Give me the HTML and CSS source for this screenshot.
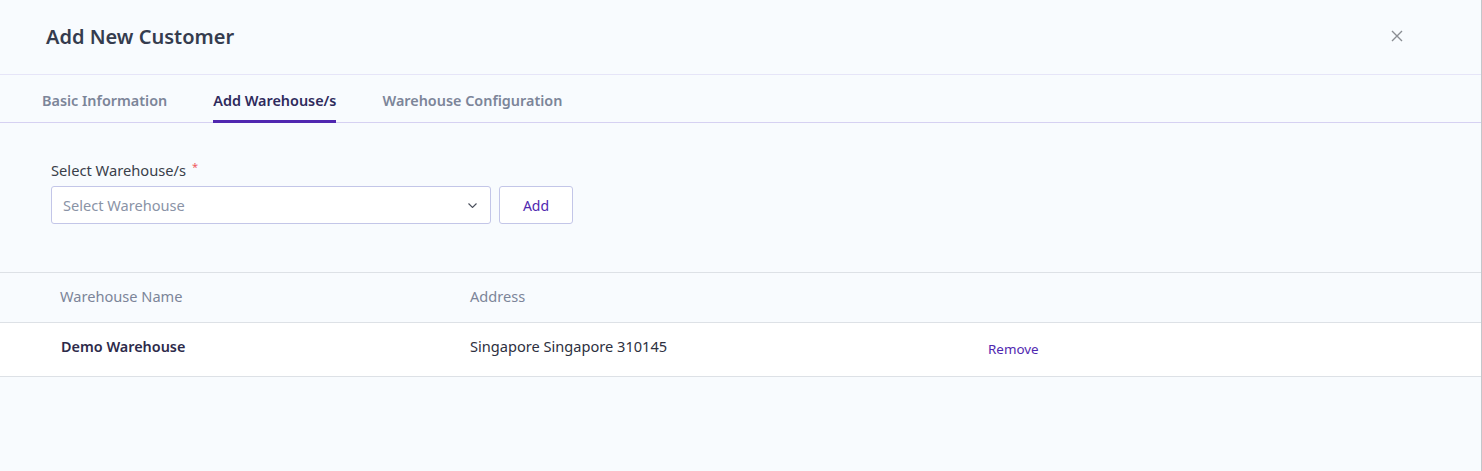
FILE: index.html
```html
<!DOCTYPE html>
<html lang="en">
<head>
  <meta charset="UTF-8" />
  <meta name="viewport" content="width=device-width, initial-scale=1.0"/>
  <title>Add New Customer</title>
  <link rel="stylesheet" href="styles.css">
</head>
<body>
  <div class="modal">
    <div class="modal-header">
      <h2>Add New Customer</h2>
      <button class="close-btn" aria-label="Close">
        <svg width="12" height="12" viewBox="0 0 12 12"><path d="M1 1L11 11M11 1L1 11" stroke="#8a8d93" stroke-width="1.4" fill="none"/></svg>
      </button>
    </div>

    <div class="tabs">
      <div class="tab">Basic Information</div>
      <div class="tab active">Add Warehouse/s</div>
      <div class="tab">Warehouse Configuration</div>
    </div>

    <div class="form-area">
      <label class="field-label">Select Warehouse/s <span class="req">*</span></label>
      <div class="field-row">
        <div class="select">
          <span class="placeholder">Select Warehouse</span>
          <svg width="9" height="5" viewBox="0 0 9 5"><path d="M0.5 0.5L4.5 4.5L8.5 0.5" stroke="#4a4f5c" stroke-width="1.1" fill="none"/></svg>
        </div>
        <button class="btn-add">Add</button>
      </div>
    </div>

    <div class="table">
      <div class="table-row table-head">
        <div>Warehouse Name</div>
        <div>Address</div>
        <div></div>
      </div>
      <div class="table-row table-body">
        <div class="name">Demo Warehouse</div>
        <div>Singapore Singapore 310145</div>
        <div><a class="remove" href="#">Remove</a></div>
      </div>
    </div>
  </div>
</body>
</html>
```

FILE: styles.css
```css
:root {
  --bg: #f8fbfe;
  --primary: #5027b0;
  --title: #353c4e;
  --muted: #7c8599;
  --line: #e6e5f8;
  --row-line: #dde1e6;
}

* {
  box-sizing: border-box;
}

body {
  margin: 0;
  font-family: 'Noto Sans', sans-serif;
  background: var(--bg);
  color: var(--title);
}

.modal {
  width: 1482px;
  height: 471px;
  border-right: 1px solid #c4c6ca;
}

.modal-header {
  display: flex;
  align-items: center;
  justify-content: space-between;
  height: 75px;
  padding: 0 78px 2px 46px;
  border-bottom: 1px solid var(--line);
}

.modal-header h2 {
  margin: 0;
  font-size: 20px;
  font-weight: 600;
  color: var(--title);
}

.close-btn {
  background: none;
  border: none;
  padding: 0;
  display: flex;
  cursor: pointer;
}

.tabs {
  display: flex;
  gap: 46px;
  padding-left: 42px;
  height: 48px;
  border-bottom: 1px solid #d6d1f2;
}

.tab {
  font-size: 14.4px;
  font-weight: 600;
  color: var(--muted);
  padding-top: 16px;
  border-bottom: 3px solid transparent;
  margin-bottom: -1px;
}

.tab.active {
  color: #2e2a5c;
  border-bottom-color: var(--primary);
}

.form-area {
  padding: 36px 0 0 51px;
  height: 149px;
}

.field-label {
  display: block;
  font-size: 14.7px;
  color: #3a3f4a;
  margin-bottom: 6px;
}

.req {
  color: #ef5a5f;
  font-size: 11px;
  vertical-align: 5px;
  margin-left: 2px;
}

.field-row {
  display: flex;
  gap: 8px;
}

.select {
  width: 440px;
  height: 38px;
  border: 1px solid #c3c6e8;
  border-radius: 3px;
  background: white;
  display: flex;
  align-items: center;
  justify-content: space-between;
  padding: 0 13px 0 11px;
}

.placeholder {
  font-size: 14.6px;
  color: #8a93a6;
}

.btn-add {
  width: 74px;
  height: 38px;
  border: 1px solid #c3c6e8;
  border-radius: 3px;
  background: white;
  color: var(--primary);
  font-family: inherit;
  font-size: 14px;
  cursor: pointer;
}

.table {
  border-top: 1px solid var(--row-line);
}

.table-row {
  display: grid;
  grid-template-columns: 410px 518px 1fr;
  padding-left: 60px;
  align-items: center;
  border-bottom: 1px solid var(--row-line);
}

.table-head {
  height: 50px;
  padding-bottom: 4px;
  font-size: 14.6px;
  color: var(--muted);
}

.table-body {
  height: 54px;
  padding-bottom: 7px;
  background: white;
  font-size: 14.6px;
  color: #2d3040;
}

.table-body .name {
  font-weight: 600;
  font-size: 14.4px;
  color: #2d2a4a;
  padding-left: 1px;
}

.remove {
  color: var(--primary);
  font-size: 13.4px;
  text-decoration: none;
  position: relative;
  top: 2px;
}
```
